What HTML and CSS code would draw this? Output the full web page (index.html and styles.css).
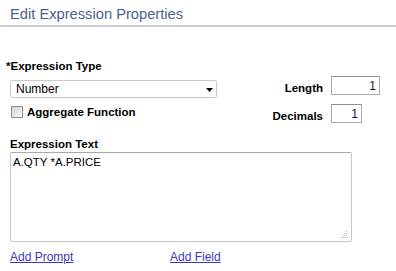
FILE: index.html
```html
<html>
<head>
<meta charset="utf-8"/>
<title>Edit Expression Properties</title>
<link rel="stylesheet" href="styles.css">
</head>
<body>
<div class="hdr">Edit Expression Properties</div>

<div class="frm">
	<div class="top">
		<div class="lcol">
			<div class="lbl">*Expression Type</div>
			<span class="sel">
				<select id="exprType">
					<option>Number</option>
					<option>Character</option>
					<option>Date</option>
				</select>
				<svg class="arr" width="7" height="4" viewBox="0 0 7 4"><path d="M0 0H7L3.5 4Z" fill="#000"/></svg>
			</span>
			<label class="chk"><input type="checkbox" id="agg"><span>Aggregate Function</span></label>
		</div>
		<div class="rcol">
			<label class="lbl" for="len">Length</label>
			<input type="text" id="len" class="num wide" value="1">
			<label class="lbl" for="dec">Decimals</label>
			<input type="text" id="dec" class="num" value="1">
		</div>
	</div>

	<div class="lbl txl">Expression Text</div>
	<div class="ta">
		<textarea id="exprText">A.QTY *A.PRICE</textarea>
		<svg class="grip" width="7" height="7" viewBox="0 0 7 7" fill="#b4b4b4">
			<rect x="5" y="0" width="1" height="1"/>
			<rect x="3" y="2" width="1" height="1"/><rect x="5" y="2" width="1" height="1"/>
			<rect x="1" y="4" width="1" height="1"/><rect x="3" y="4" width="1" height="1"/><rect x="5" y="4" width="1" height="1"/>
			<rect x="0" y="6" width="1" height="1"/><rect x="2" y="6" width="1" height="1"/><rect x="4" y="6" width="1" height="1"/><rect x="6" y="6" width="1" height="1"/>
		</svg>
	</div>
	<div class="lnks">
		<a class="lnk">Add Prompt</a>
		<a class="lnk">Add Field</a>
	</div>
</div>
</body>
</html>
```

FILE: styles.css
```css
html, body { margin: 0; background: #fff; font-family: "Liberation Sans", Arial, sans-serif; font-size: 12px; color: #000; }
.hdr { font-size: 14.7px; color: #4c5f8d; padding: 6px 10px 0; height: 19px; border-bottom: 2px solid #cdcdd8; }
.frm { padding: 33px 0 0 10px; }
.top { display: flex; }
.lcol { width: 207px; }
.lbl { font-weight: bold; font-size: 11.5px; }
.lcol > .lbl { margin-left: -4px; }
.sel { position: relative; display: block; margin-top: 8px; }
.sel select { appearance: none; -webkit-appearance: none; width: 207px; height: 18px; padding: 0 0 0 5px;
	border: 1px solid #c9c9c9; border-radius: 2px; background: #fff; font: 12px "Liberation Sans", Arial, sans-serif; color: #000; }
.sel .arr { position: absolute; right: 4px; top: 8px; }
.chk { display: flex; align-items: center; gap: 4px; margin-top: 8px; font-weight: bold; font-size: 11.5px; }
.chk input { appearance: none; -webkit-appearance: none; margin: 0 0 0 1px; width: 12px; height: 12px;
	border: 1px solid #8f8f8f; background: linear-gradient(135deg, #d2d2d2, #f6f6f6); }
.rcol { display: grid; grid-template-columns: 49px auto; align-items: center; column-gap: 8px; row-gap: 9px;
	justify-items: end; margin: 16px 0 0 57px; align-self: flex-start; }
.rcol .lbl { margin-top: 4px; }
.num { justify-self: start; height: 19px; width: 31px; box-sizing: border-box; border: 1px solid #a9a9a9; border-top-color: #8f8f8f;
	padding: 0 3px; text-align: right; font: 12px "Liberation Sans", Arial, sans-serif; color: #10104a; }
.num.wide { width: 49px; }
.txl { margin-top: 15px; }
.ta { position: relative; width: 342px; margin-top: 2px; }
.ta textarea { display: block; width: 342px; height: 90px; box-sizing: border-box; resize: none;
	border: 1px solid #c8c8c8; border-top-color: #a9a9a9; border-radius: 2px; padding: 3px 2px;
	font: 11.5px "Liberation Sans", Arial, sans-serif; color: #000; }
.grip { position: absolute; right: 4px; bottom: 4px; }
.lnks { display: flex; margin-top: 8px; }
.lnk { color: #3b37c4; text-decoration: underline; cursor: pointer; width: 160px; }
```
